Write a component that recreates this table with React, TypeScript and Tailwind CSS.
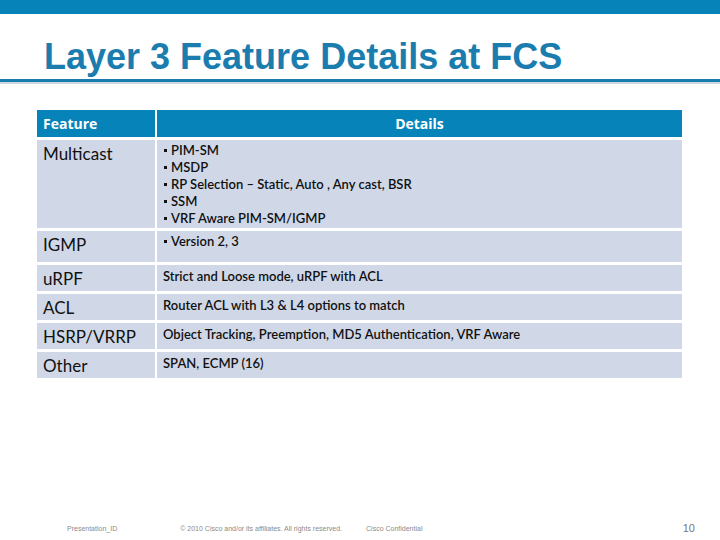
import React from 'react';

const rows: { feature: string; details: string[]; bullets?: boolean; h: string }[] = [
  {
    feature: 'Multicast',
    details: [
      'PIM-SM',
      'MSDP',
      'RP Selection – Static, Auto , Any cast, BSR',
      'SSM',
      'VRF Aware PIM-SM/IGMP',
    ],
    bullets: true,
    h: 'h-[88px]',
  },
  { feature: 'IGMP', details: ['Version 2, 3'], bullets: true, h: 'h-[31px]' },
  { feature: 'uRPF', details: ['Strict and Loose mode, uRPF with ACL'], h: 'h-[26px]' },
  { feature: 'ACL', details: ['Router ACL with L3 & L4 options to match'], h: 'h-[26px]' },
  {
    feature: 'HSRP/VRRP',
    details: ['Object Tracking, Preemption, MD5 Authentication, VRF Aware'],
    h: 'h-[26px]',
  },
  { feature: 'Other', details: ['SPAN, ECMP (16)'], h: 'h-[26px]' },
];

const App: React.FC = () => {
  return (
    <div className="w-[720px] h-[540px] bg-white flex flex-col relative overflow-hidden">
      {/* top band */}
      <div className="h-[14px] bg-[#0683b9]" />

      {/* title */}
      <h1 className="mt-[25px] pl-[44px] text-[36px] leading-[36px] font-bold text-[#1b7dae] font-['Liberation_Sans',Arial,sans-serif]">
        Layer 3 Feature Details at FCS
      </h1>
      <div className="mt-[4px] h-[3px] bg-[#1b7dae]" />
      <div className="h-[2px] bg-[#cfd8e2]" />

      {/* table */}
      <div className="mt-[26px] ml-[37px] w-[645px] flex flex-col gap-[3px] font-['Lato',sans-serif]">
        <div className="flex gap-[2px] h-[27px] font-['Open_Sans',sans-serif]">
          <div className="w-[118px] bg-[#0683b9] text-white font-bold text-[14px] pl-[6px] flex items-center">
            Feature
          </div>
          <div className="flex-1 bg-[#0683b9] text-white font-bold text-[14px] flex items-center justify-center">
            Details
          </div>
        </div>
        {rows.map((r) => (
          <div key={r.feature} className={`flex gap-[2px] ${r.h}`}>
            <div className="w-[118px] bg-[#d0d8e8] text-[#111] text-[17px] leading-[20px] pl-[6px] pt-[4px]">
              {r.feature}
            </div>
            <div
              className={`flex-1 bg-[#d0d8e8] text-[#111] font-semibold text-[13px] leading-[17px] pl-[6px] ${
                r.bullets ? 'pt-[2px]' : 'pt-[3px]'
              }`}
            >
              {r.details.map((d) => (
                <div key={d} className="whitespace-nowrap flex items-center">
                  {r.bullets && <span className="w-[3px] h-[3px] bg-[#111] mr-[4px] ml-[1px]" />}
                  {d}
                </div>
              ))}
            </div>
          </div>
        ))}
      </div>

      {/* footer */}
      <div className="mt-auto mb-[7px] flex items-end text-[#8a8a8a] font-['Liberation_Sans',Arial,sans-serif]">
        <span className="ml-[67px] text-[7px] leading-[8px]">Presentation_ID</span>
        <span className="ml-[63px] text-[7px] leading-[8px]">
          © 2010 Cisco and/or its affiliates. All rights reserved.
        </span>
        <span className="ml-[24px] text-[7px] leading-[8px]">Cisco Confidential</span>
        <span className="ml-auto mr-[25px] text-[11px] leading-[10px] text-[#777]">10</span>
      </div>
    </div>
  );
};

export default App;
